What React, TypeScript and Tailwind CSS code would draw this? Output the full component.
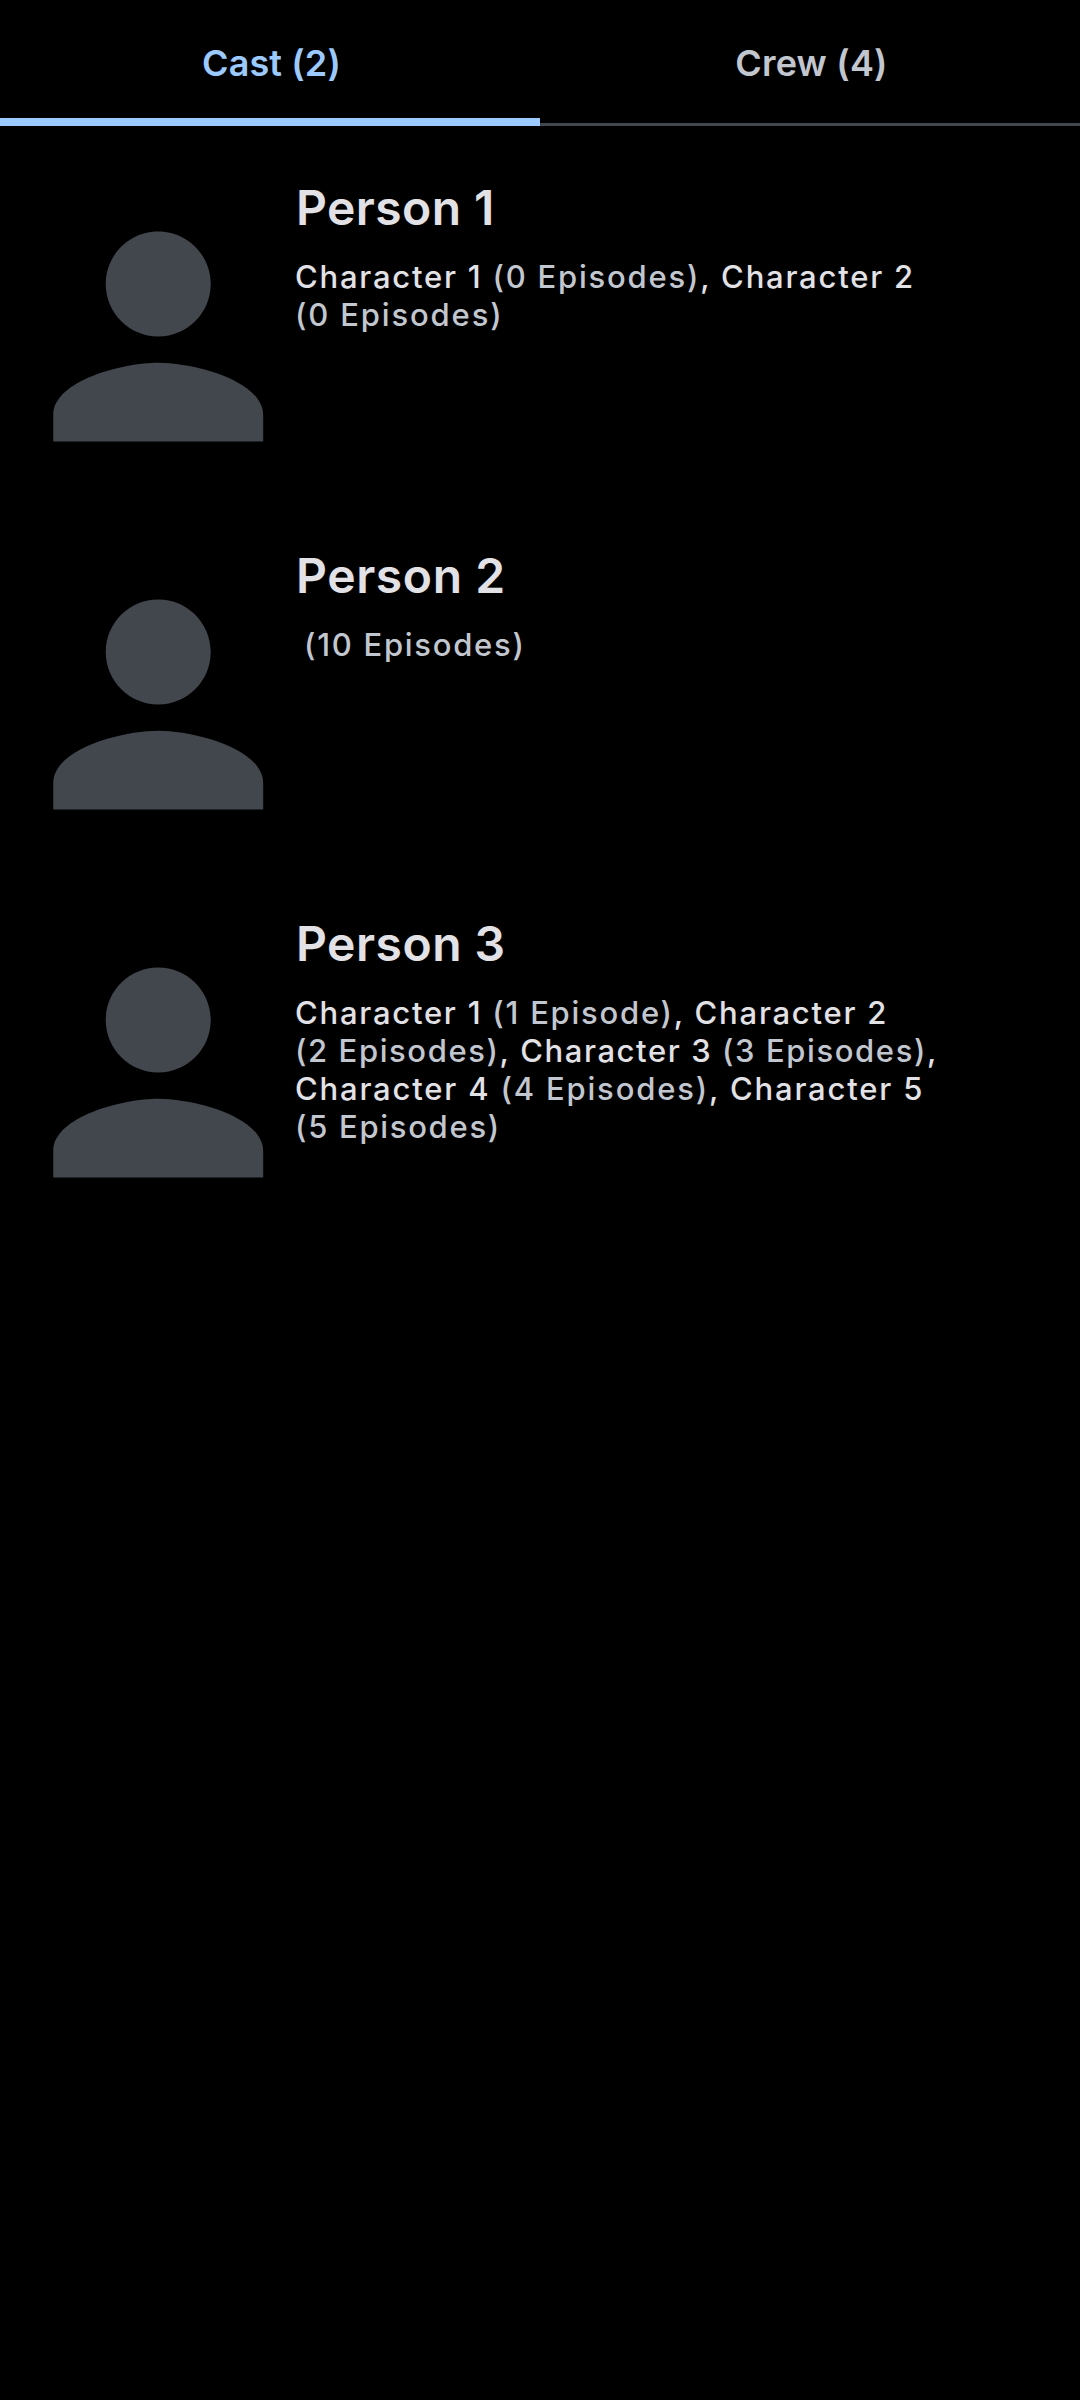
type Part = { text: string; muted?: boolean };
type Line = { className: string; parts: Part[] };
type Person = { name: string; nameClass: string; lines: Line[] };

const people: Person[] = [
  {
    name: "Person 1",
    nameClass: "tracking-[0.41px]",
    lines: [
      {
        className: "tracking-[1.78px]",
        parts: [{ text: "Character 1 " }, { text: "(0 Episodes)", muted: true }, { text: ", Character 2" }],
      },
      { className: "tracking-[1.85px]", parts: [{ text: "(0 Episodes)", muted: true }] },
    ],
  },
  {
    name: "Person 2",
    nameClass: "tracking-[0.6px]",
    lines: [{ className: "pl-[9px] tracking-[1.73px]", parts: [{ text: "(10 Episodes)", muted: true }] }],
  },
  {
    name: "Person 3",
    nameClass: "tracking-[0.5px]",
    lines: [
      {
        className: "tracking-[1.76px]",
        parts: [{ text: "Character 1 " }, { text: "(1 Episode)", muted: true }, { text: ", Character 2" }],
      },
      {
        className: "tracking-[1.6px]",
        parts: [
          { text: "(2 Episodes)", muted: true },
          { text: ", Character 3 " },
          { text: "(3 Episodes)", muted: true },
          { text: "," },
        ],
      },
      {
        className: "tracking-[1.82px]",
        parts: [{ text: "Character 4 " }, { text: "(4 Episodes)", muted: true }, { text: ", Character 5" }],
      },
      { className: "tracking-[1.71px]", parts: [{ text: "(5 Episodes)", muted: true }] },
    ],
  },
];

function PersonIcon() {
  return (
    <svg className="h-[316px] w-[295px] shrink-0 fill-[#42474e]" viewBox="0 0 295 316" aria-hidden="true">
      <g transform="translate(0.8 1) scale(13.12)">
        <path d="M12 12c2.21 0 4-1.79 4-4s-1.79-4-4-4-4 1.79-4 4 1.79 4 4 4zm0 2c-2.67 0-8 1.34-8 4v2h16v-2c0-2.66-5.33-4-8-4z" />
      </g>
    </svg>
  );
}

function PersonRow({ person }: { person: Person }) {
  return (
    <li className="flex h-[368px] items-start pt-[26px]">
      <PersonIcon />
      <div className="pt-0.5 whitespace-pre">
        <h2 className={"pl-px text-[48px] leading-[56px] font-semibold " + person.nameClass}>{person.name}</h2>
        <div className="mt-[22px] text-[31px] leading-[38px] font-medium">
          {person.lines.map((line, i) => (
            <p key={i} className={line.className}>
              {line.parts.map((part, j) => (
                <span key={j} className={part.muted ? "text-[#c2c7cf]" : "text-[#e2e2e6]"}>
                  {part.text}
                </span>
              ))}
            </p>
          ))}
        </div>
      </div>
    </li>
  );
}

export default function App() {
  return (
    <main className="min-h-[2400px] w-[1080px] bg-black font-[Inter,sans-serif] text-[#e2e2e6]">
      <div role="tablist" className="grid h-[126px] grid-cols-2 text-[36px] leading-[48px] font-semibold">
        <button
          role="tab"
          aria-selected="true"
          className="flex items-center justify-center border-b-8 border-[#9ccaff] pt-2 pl-[3px] tracking-[0.1px] text-[#9ccaff]"
        >
          Cast (2)
        </button>
        <button
          role="tab"
          aria-selected="false"
          className="flex items-center justify-center border-b-[3px] border-[#42474e] pt-[3px] pl-[3px] tracking-[0.2px] text-[#c2c7cf]"
        >
          Crew (4)
        </button>
      </div>
      <ul className="pt-[26px]">
        {people.map((person) => (
          <PersonRow key={person.name} person={person} />
        ))}
      </ul>
    </main>
  );
}
